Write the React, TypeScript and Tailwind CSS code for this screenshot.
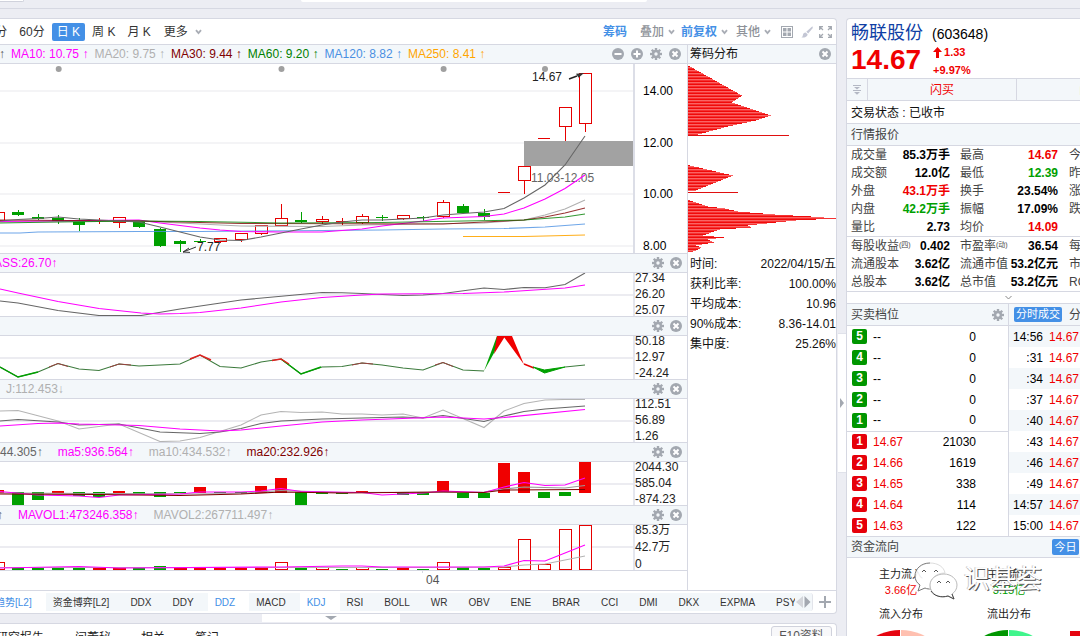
import type { ReactNode } from "react";

const TONE: Record<string, string> = {
  red: "text-[#f00000]",
  green: "text-[#00a000]",
  black: "text-black",
};

type Candle = { x: number; top: number; bottom: number; high: number; low: number; kind: "up" | "down" };

const candles: Candle[] = [
  { x: -2, top: 212, bottom: 221, high: 212, low: 221, kind: "up" },
  { x: 18, top: 212, bottom: 215, high: 210, low: 216, kind: "down" },
  { x: 38, top: 217, bottom: 219, high: 214, low: 220, kind: "down" },
  { x: 58, top: 218, bottom: 221, high: 215, low: 224, kind: "down" },
  { x: 79, top: 221, bottom: 225, high: 218, low: 231, kind: "down" },
  { x: 99, top: 220, bottom: 221, high: 218, low: 224, kind: "up" },
  { x: 119, top: 217, bottom: 223, high: 217, low: 228, kind: "up" },
  { x: 139, top: 221, bottom: 227, high: 221, low: 228, kind: "down" },
  { x: 160, top: 229, bottom: 246, high: 228, low: 247, kind: "down" },
  { x: 180, top: 241, bottom: 244, high: 240, low: 252, kind: "down" },
  { x: 200, top: 241, bottom: 242, high: 239, low: 243, kind: "down" },
  { x: 220, top: 238, bottom: 242, high: 238, low: 243, kind: "up" },
  { x: 241, top: 233, bottom: 240, high: 233, low: 242, kind: "up" },
  { x: 261, top: 225, bottom: 234, high: 225, low: 235, kind: "up" },
  { x: 281, top: 218, bottom: 226, high: 204, low: 226, kind: "up" },
  { x: 301, top: 220, bottom: 222, high: 212, low: 223, kind: "down" },
  { x: 322, top: 219, bottom: 222, high: 216, low: 224, kind: "up" },
  { x: 342, top: 221, bottom: 222, high: 218, low: 225, kind: "up" },
  { x: 362, top: 216, bottom: 223, high: 214, low: 224, kind: "up" },
  { x: 382, top: 217, bottom: 218, high: 215, low: 221, kind: "down" },
  { x: 403, top: 215, bottom: 219, high: 215, low: 220, kind: "up" },
  { x: 423, top: 217, bottom: 218, high: 216, low: 221, kind: "down" },
  { x: 443, top: 202, bottom: 217, high: 200, low: 218, kind: "up" },
  { x: 463, top: 206, bottom: 213, high: 204, low: 213, kind: "down" },
  { x: 484, top: 213, bottom: 217, high: 209, low: 220, kind: "down" },
  { x: 504, top: 192, bottom: 193, high: 192, low: 193, kind: "up" },
  { x: 524, top: 166, bottom: 181, high: 166, low: 194, kind: "up" },
  { x: 544, top: 138, bottom: 139, high: 138, low: 139, kind: "up" },
  { x: 565, top: 107, bottom: 127, high: 107, low: 141, kind: "up" },
  { x: 585, top: 73, bottom: 124, high: 73, low: 132, kind: "up" },
];

const priceLines = [
  { color: "#4a90e2", opacity: 0.8, points: "0,233 20,233 38,232 140,231.5 200,231.5 322,230.5 382,230 443,229 504,228.5 545,227 585,224" },
  { color: "#ffa500", opacity: 0.9, points: "463,236.5 524,236.5 545,236 585,235" },
  { color: "#b0b0b0", opacity: 1, points: "0,222 139,221 200,224 241,226 322,226.5 362,225 484,223 524,220 545,215 565,209 585,200" },
  { color: "#ff00ff", opacity: 1, points: "0,221.5 139,220 160,223 180,225.5 200,228 220,230 241,231.5 281,232 322,232 342,230.5 362,229 382,226 423,221 443,218 484,216.5 504,214 524,208 545,199 565,188.5 585,175" },
  { color: "#800000", opacity: 0.8, points: "0,220 139,221 241,223.5 443,224 484,222 524,220 545,217 565,213 585,208" },
  { color: "#008000", opacity: 0.8, points: "0,223 58,222 139,221 200,221.5 281,223 382,222.5 463,221 524,220 565,217 585,214" },
  { color: "#666666", opacity: 1, points: "0,221 18,219.5 38,218.5 58,217 79,219 99,220 119,221 139,222 160,227 180,232 200,237 220,240 241,240.5 261,237 281,233 301,229 322,225 342,222 362,220 382,220 403,219 423,218 443,215 463,213.5 484,212 504,208.5 524,198 545,185 565,165 585,136" },
];

// [x, top, bottom, color]
const ddzBars: [number, number, number, string][] = [
  [-2, 490, 493, "r"], [18, 492, 505, "g"], [38, 492, 500, "g"], [58, 491, 493, "r"], [79, 492, 496, "g"],
  [99, 492, 497, "g"], [119, 491, 493, "r"], [139, 492, 494, "g"], [160, 492, 497, "g"], [180, 492, 493, "g"],
  [200, 487, 493, "r"], [220, 492, 493, "g"], [241, 492, 493, "g"], [261, 486, 493, "r"], [281, 478, 493, "r"],
  [301, 492, 505, "g"], [322, 492, 494, "g"], [342, 492, 494, "g"], [362, 491, 493, "r"], [382, 492, 493, "g"],
  [403, 492, 495, "g"], [423, 492, 495, "g"], [443, 481, 492, "r"], [463, 493, 498, "g"], [484, 493, 498, "g"],
  [504, 463, 493, "r"], [524, 472, 493, "r"], [544, 492, 498, "g"], [565, 492, 496, "g"], [585, 462, 493, "r"],
];

// h is a hollow red bar
const volBars: [number, number, string][] = [
  [-2, 562, "h"], [18, 568, "g"], [38, 568, "g"], [58, 568, "g"], [79, 568, "g"], [99, 568, "h"], [119, 568, "h"],
  [139, 568, "g"], [160, 566, "g"], [180, 568, "h"], [200, 568, "r"], [220, 568, "r"], [241, 568, "r"],
  [261, 568, "h"], [281, 562, "h"], [301, 567, "g"], [322, 567, "h"], [342, 569, "g"], [362, 567, "h"],
  [382, 569, "g"], [403, 568, "r"], [423, 569, "g"], [443, 562, "h"], [463, 567, "g"], [484, 568, "g"],
  [504, 567, "h"], [524, 539, "h"], [544, 564, "h"], [565, 529, "h"], [585, 525, "h"],
];

// y position and bar width of the chip distribution
const chipGroups: [number, number][][] = [
  [[66, 2], [95, 54], [102, 44], [115, 83], [120, 68], [126, 40], [134, 10], [136, 1]],
  [[165, 2], [175, 45], [181, 30], [190, 8], [191, 4]],
  [[200, 2], [206, 20], [208, 37], [211, 50], [214, 87], [216, 123], [218, 148], [220, 108], [222, 88], [225, 60], [227, 63], [229, 32], [231, 26], [235, 15], [237, 36], [239, 20], [242, 26], [245, 8], [247, 13], [249, 10], [252, 3]],
];
const chipColors = ["#f00a0a", "#fa6464", "#f53232"];

function chipWidths() {
  const rows: { y: number; w: number }[] = [];
  chipGroups.forEach((group) => {
    for (let i = 0; i < group.length - 1; i++) {
      const [y0, w0] = group[i];
      const [y1, w1] = group[i + 1];
      for (let y = y0; y < y1; y++) rows.push({ y, w: Math.round(w0 + ((w1 - w0) * (y - y0)) / (y1 - y0)) });
    }
  });
  return rows;
}

const chipInfo = [
  ["时间:", "2022/04/15/五"],
  ["获利比率:", "100.00%"],
  ["平均成本:", "10.96"],
  ["90%成本:", "8.36-14.01"],
  ["集中度:", "25.26%"],
];

const maItems = [
  { text: "MA10: 10.75", color: "text-[#ff00ff]" },
  { text: "MA20: 9.75", color: "text-[#b0b0b0]" },
  { text: "MA30: 9.44", color: "text-[#800000]" },
  { text: "MA60: 9.20", color: "text-[#008000]" },
  { text: "MA120: 8.82", color: "text-[#4a90e2]" },
  { text: "MA250: 8.41", color: "text-[#ffa500]" },
];

const tabs = ["趋势[L2]", "资金博弈[L2]", "DDX", "DDY", "DDZ", "MACD", "KDJ", "RSI", "BOLL", "WR", "OBV", "ENE", "BRAR", "CCI", "DMI", "DKX", "EXPMA", "PSY"];
const activeTabs = ["趋势[L2]", "DDZ", "KDJ"];

type Row = { a: string; as?: string; av: string; at: string; b: string; bs?: string; bv: string; bt: string; c: string };

const quotes: Row[] = [
  { a: "成交量", av: "85.3万手", at: "black", b: "最高", bv: "14.67", bt: "red", c: "今开" },
  { a: "成交额", av: "12.0亿", at: "black", b: "最低", bv: "12.39", bt: "green", c: "昨收" },
  { a: "外盘", av: "43.1万手", at: "red", b: "换手", bv: "23.54%", bt: "black", c: "涨停" },
  { a: "内盘", av: "42.2万手", at: "green", b: "振幅", bv: "17.09%", bt: "black", c: "跌停" },
  { a: "量比", av: "2.73", at: "black", b: "均价", bv: "14.09", bt: "red", c: "" },
];
const finance: Row[] = [
  { a: "每股收益", as: "(四)", av: "0.402", at: "black", b: "市盈率", bs: "(动)", bv: "36.54", bt: "black", c: "每股" },
  { a: "流通股本", av: "3.62亿", at: "black", b: "流通市值", bv: "53.2亿元", bt: "black", c: "市净" },
  { a: "总股本", av: "3.62亿", at: "black", b: "总市值", bv: "53.2亿元", bt: "black", c: "ROE" },
];

const asks = [5, 4, 3, 2, 1];
const bids = [
  [1, "14.67", "21030"],
  [2, "14.66", "1619"],
  [3, "14.65", "338"],
  [4, "14.64", "114"],
  [5, "14.63", "122"],
];
const ticks = ["14:56", ":31", ":34", ":37", ":40", ":43", ":46", ":49", "14:57", "15:00"];

/* ---------- icons ---------- */

function GearIcon() {
  return (
    <svg width="12" height="12" viewBox="0 0 12 12" className="block">
      {[0, 45, 90, 135].map((a) => (
        <rect key={a} x="4.8" y="0" width="2.4" height="12" fill="#a3a8b0" transform={`rotate(${a} 6 6)`} />
      ))}
      <circle cx="6" cy="6" r="4.2" fill="#a3a8b0" />
      <circle cx="6" cy="6" r="1.7" fill="#f3f7fa" />
    </svg>
  );
}

function RoundIcon({ d }: { d: string }) {
  return (
    <svg width="12" height="12" viewBox="0 0 12 12" className="block">
      <circle cx="6" cy="6" r="6" fill="#a3a8b0" />
      <path d={d} stroke="#fff" strokeWidth="2" fill="none" />
    </svg>
  );
}
const CROSS = "M3.5 3.5l5 5M8.5 3.5l-5 5";

function Chevron() {
  return (
    <svg width="7" height="6" viewBox="0 0 7 6" className="block">
      <path d="M1 1.2l2.5 3 2.5-3" fill="none" stroke="#a9adb5" strokeWidth="1.8" />
    </svg>
  );
}

function IconButton({ label, children }: { label: string; children: ReactNode }) {
  return <button type="button" aria-label={label} className="cursor-pointer">{children}</button>;
}

/* ---------- chart pieces ---------- */

function Line({ points, color, opacity = 1 }: { points: string; color: string; opacity?: number }) {
  return <polyline points={points} fill="none" stroke={color} strokeWidth="1.1" strokeOpacity={opacity} />;
}

function PriceChart() {
  return (
    <svg viewBox="0 64 633 189" preserveAspectRatio="none" className="block h-[189px] min-w-0 flex-1">
      {[90, 142, 193, 245].map((y) => <rect key={y} x="0" y={y} width="633" height="2" fill="#f4f4f6" />)}
      {[58.7, 281.5, 443.6, 545].map((x) => <circle key={x} cx={x} cy="69" r="3" fill="#a0a0a0" />)}
      <rect x="524" y="141" width="109" height="25" fill="#a2a2a2" />
      {candles.map((c) => {
        const color = c.kind === "up" ? "#e60000" : "#00a000";
        const hollow = c.kind === "up" && c.bottom - c.top > 2;
        return (
          <g key={c.x}>
            <rect x={c.x} y={c.high} width="1" height={c.low - c.high} fill={color} />
            {hollow
              ? <rect x={c.x - 5.5} y={c.top + 0.5} width="12" height={c.bottom - c.top - 1} fill="#fff" stroke={color} />
              : <rect x={c.x - 6} y={c.top} width="12" height={c.bottom - c.top} fill={color} />}
          </g>
        );
      })}
      <text x="531" y="182" fontSize="12" fill="#666">11.03-12.05</text>
      {priceLines.map((l) => <Line key={l.color} {...l} />)}
      <text x="532" y="81" fontSize="12" fill="#222">14.67</text>
      <path d="M569 79l8-3" stroke="#222" strokeWidth="1.4" fill="none" />
      <path d="M584 73l-8 0.8 2.6 4z" fill="#333" />
      <text x="197" y="251" fontSize="12" fill="#222">7.77</text>
      <path d="M196 247l-13 5M189 248l-6 4 7 0.4" stroke="#333" fill="none" />
    </svg>
  );
}

function AxisLabels({ labels }: { labels: string[] }) {
  return (
    <div className="flex w-[54px] shrink-0 flex-col justify-between border-l-2 border-[#e4e6ee] text-[12px] leading-[11px] text-[#222]">
      {labels.map((l) => <span key={l}>{l}</span>)}
    </div>
  );
}

function SubPanel({ title, labels, top, height, children }: { title: ReactNode; labels: string[]; top: number; height: number; children: ReactNode }) {
  return (
    <section>
      <div className="flex h-5 items-center justify-between overflow-hidden border-y border-[#d6d8e2] bg-[#f3f7fa] pr-[5px] text-[12px] leading-[18px] whitespace-nowrap">
        <div className="flex gap-[15px]">{title}</div>
        <div className="flex gap-[6px]">
          <IconButton label="设置"><GearIcon /></IconButton>
          <IconButton label="关闭"><RoundIcon d={CROSS} /></IconButton>
        </div>
      </div>
      <div className="flex">
        <svg viewBox={`0 ${top} 633 ${height}`} preserveAspectRatio="none" style={{ height }} className="block min-w-0 flex-1">
          <rect x="0" y={top + 21} width="633" height="2" fill="#ececf1" />
          {children}
        </svg>
        <AxisLabels labels={labels} />
      </div>
    </section>
  );
}

function Toolbar() {
  const period = "cursor-pointer h-[18px] leading-[18px]";
  return (
    <div className="flex h-[26px] items-center justify-between border-b border-[#d6d8e2] text-[12px] text-[#333] whitespace-nowrap">
      <div className="-ml-[18px] flex items-center">
        <button type="button" className={period}>30分</button>
        <button type="button" className={`${period} ml-3`}>60分</button>
        <button type="button" className={`${period} mx-[7px] rounded-[2px] bg-[#4490e6] px-[5px] text-white`}>日 K</button>
        <button type="button" className={period}>周 K</button>
        <button type="button" className={`${period} ml-3`}>月 K</button>
        <button type="button" className={`${period} ml-[13px] flex items-center gap-[7px]`}>更多 <Chevron /></button>
      </div>
      <div className="flex items-center pr-1 font-medium text-[#8e9299]">
        <button type="button" className="font-bold text-[#4490e6]">筹码</button>
        <button type="button" className="ml-[13px] flex items-center gap-1">叠加 <Chevron /></button>
        <button type="button" className="ml-[6px] flex items-center gap-1 text-[#4490e6]"><span className="font-bold">前复权</span> <Chevron /></button>
        <button type="button" className="ml-[8px] flex items-center gap-1">其他 <Chevron /></button>
        <button type="button" aria-label="布局" className="ml-[10px]">
          <svg width="12" height="12" viewBox="0 0 12 12" className="block">
            <rect x="0.5" y="0.5" width="11" height="11" fill="none" stroke="#a3a8b0" />
            <path d="M2 2h3.5v3.5H2zM6.5 2H10v3.5H6.5zM2 6.5h3.5V10H2zM6.5 6.5H10V10H6.5z" fill="#a3a8b0" />
          </svg>
        </button>
        <button type="button" aria-label="画线" className="ml-2">
          <svg width="12" height="12" viewBox="0 0 12 12" className="block">
            <path d="M11.4 0.3l0.4 1.6-4.6 5.6-1.9-1.8z" fill="#c3c6d4" />
            <path d="M4.6 6.4l2 1.8c0 2.4-2.8 3.6-6.3 3.4 1.5-0.8 1.4-2 1.7-3.2 0.3-1.2 1.4-2 2.6-2z" fill="#c3c6d4" />
          </svg>
        </button>
        <button type="button" aria-label="全屏" className="ml-[6px]">
          <svg width="13" height="12" viewBox="0 0 13 12" className="block">
            <path d="M0.7 4V0.7H4M9 0.7h3.3V4M12.3 8v3.3H9M4 11.3H0.7V8M1 1l3 3M12 1L9 4M12 11L9 8M1 11l3-3" fill="none" stroke="#a3a8b0" strokeWidth="1.3" />
          </svg>
        </button>
      </div>
    </div>
  );
}

function ChipPanel() {
  return (
    <aside className="w-[148px] shrink-0">
      <div className="flex h-[19px] items-center justify-between border-b border-[#d6d8e2] bg-[#f3f7fa] pr-[5px] pl-[2px] text-[12px] text-[#111]">
        <span>筹码分布</span>
        <IconButton label="关闭筹码"><RoundIcon d={CROSS} /></IconButton>
      </div>
      <svg viewBox="0 64 148 190" className="block h-[190px] w-full">
        {chipWidths().map((r) => <rect key={r.y} x="0" y={r.y} width={r.w} height="1" fill={chipColors[r.y % 3]} />)}
        <rect x="0" y="135" width="101" height="1" fill="#e01010" />
        <rect x="0" y="192" width="50" height="1" fill="#e01010" />
      </svg>
      <dl className="text-[12px] leading-5 text-[#111]">
        {chipInfo.map(([k, v]) => (
          <div key={k} className="flex justify-between pl-[2px]"><dt>{k}</dt><dd>{v}</dd></div>
        ))}
      </dl>
    </aside>
  );
}

function Charts() {
  return (
    <div className="min-w-0 flex-1 border-r border-[#d6d8e2]">
      <div className="flex h-[19px] items-center justify-between border-b border-[#d6d8e2] bg-[#f3f7fa] pr-[6px] text-[12px] leading-[18px] whitespace-nowrap">
        <div className="-ml-px flex gap-[6px]">
          <span className="text-[#555]">↑</span>
          {maItems.map((m) => <span key={m.text} className={m.color}>{m.text} ↑</span>)}
        </div>
        <div className="flex gap-[7px]">
          <IconButton label="缩小"><RoundIcon d="M2.5 6h7" /></IconButton>
          <IconButton label="放大"><RoundIcon d="M2.5 6h7M6 2.5v7" /></IconButton>
          <IconButton label="设置"><GearIcon /></IconButton>
          <IconButton label="关闭"><RoundIcon d={CROSS} /></IconButton>
        </div>
      </div>
      <div className="flex">
        <PriceChart />
        <div className="flex w-[54px] shrink-0 flex-col justify-between border-l-2 border-[#dcdee7] pt-[21px] pb-px pl-2 text-[12px] leading-3 text-black">
          <span>14.00</span><span>12.00</span><span>10.00</span><span>8.00</span>
        </div>
      </div>

      <SubPanel title={<span className="-ml-[16px] text-[#ff00ff]">MASS:26.70↑</span>} labels={["27.34", "26.20", "25.07"]} top={273} height={43}>
        <Line color="#666" points="0,301 18,303 58,310.5 99,315.5 141,315.5 180,309 241,300 322,292.5 342,292.7 362,293.5 403,295.5 423,295 443,293.5 484,288 504,289.5 524,287.5 545,287.7 565,284.5 585,273" />
        <Line color="#ff00ff" points="0,289 18,293 58,301.5 99,308.5 141,313 160,314 180,313.5 200,312.5 241,308 281,302 322,297.5 362,295 382,294 463,293.5 504,292 565,288 585,285" />
      </SubPanel>

      <SubPanel title={null} labels={["50.18", "12.97", "-24.24"]} top={336} height={43}>
        <Line color="#3c7a3c" points="0,367 18,377 38,372 58,363.5 79,369 99,370.5 119,364 139,366 160,365 180,364 200,355 220,366.5 241,368 261,362 281,359 301,374 322,367 342,366.5 362,363 382,365 403,368 423,370 443,362.5 463,370 484,371" />
        <path d="M0 367l18 10 20-5M281 359l20 15 20-7" fill="none" stroke="#00a000" strokeWidth="1.4" />
        <path d="M190 359l10-4 11 5M272 360.5l9-1.5 8 5" fill="none" stroke="#e02020" strokeWidth="1.4" />
        <path d="M49 367l9-3.5 10 3M110 367l9-3 12 1M352 365l10-2 11 1M435 365l8-2.5 10 4" fill="none" stroke="#9a4040" />
        <path d="M484 371l13-35h4l-7 17z" fill="#00a000" />
        <path d="M494 354l3-18h15l12 28.5-19.7-27z" fill="#f00000" />
        <path d="M524 364l10 4" stroke="#e60000" strokeWidth="1.5" />
        <path d="M533 367l11.5 3 20.5-3-20.5 6z" fill="#00a000" stroke="#00a000" />
        <path d="M565 367l20-2" stroke="#3c7a3c" />
      </SubPanel>

      <SubPanel title={<span className="ml-[6px] text-[#b0b0b0]">J:112.453↓</span>} labels={["112.51", "56.89", "1.26"]} top={399} height={43}>
        <Line color="#b4b4b4" points="0,411 18,410.5 58,421 79,429 119,424 160,441.5 180,441 200,437.5 241,425 261,415 281,411.5 301,412.5 322,412 342,414 362,414 382,415 403,414 423,418 443,410 484,427.5 504,411 524,403.5 545,400 565,399.5 585,399.5" />
        <Line color="#666" points="0,421 18,419.5 58,422 79,425 119,424 160,432 200,433.5 220,432 241,428.5 261,423.5 281,421 322,419 362,418 403,417 423,418 443,415.5 484,421.5 504,416 524,411.5 545,409 585,406" />
        <Line color="#ff00ff" points="0,426 38,423.5 58,423 79,424 139,425.5 180,429 220,431 241,430 281,426 322,422 362,420 443,417 484,419 504,417.5 585,409.5" />
      </SubPanel>

      <SubPanel
        title={<>
          <span className="text-[#666]">44.305↑</span>
          <span className="text-[#ff00ff]">ma5:936.564↑</span>
          <span className="text-[#b0b0b0]">ma10:434.532↑</span>
          <span className="text-[#800000]">ma20:232.926↑</span>
        </>}
        labels={["2044.30", "585.04", "-874.23"]} top={462} height={43}>
        {ddzBars.map(([x, t, b, c]) => <rect key={x} x={x - 6} y={t} width="12" height={b - t} fill={c === "r" ? "#f00000" : "#00a000"} />)}
        <Line color="#999" points="0,493 200,494 241,493.5 281,490.5 342,492.5 484,492 504,489 524,487 565,488 585,485.5" />
        <Line color="#ff00ff" points="0,491.5 38,495 79,496 99,497.5 119,495 180,494 200,492 241,492 261,491 281,488.5 301,491.5 362,492.5 382,495 423,493 443,491 484,492.5 504,487 524,482.5 545,485.5 565,485 585,478" />
        <Line color="#800000" points="0,494 99,494.5 180,495.5 241,494 281,492 342,493 443,492 484,492.5 504,490 585,489.5" />
      </SubPanel>

      <SubPanel
        title={<>
          <span className="-ml-[3px] text-[#666]">↑</span>
          <span className="text-[#ff00ff]">MAVOL1:473246.358↑</span>
          <span className="text-[#b0b0b0]">MAVOL2:267711.497↑</span>
        </>}
        labels={["85.3万", "42.7万", "0"]} top={525} height={45}>
        {volBars.map(([x, t, c]) => c === "h"
          ? <rect key={x} x={x - 5.5} y={t + 0.5} width="12" height={569 - t} fill="#fff" stroke="#e60000" />
          : <rect key={x} x={x - 6} y={t} width="12" height={570 - t} fill={c === "r" ? "#f00000" : "#00a000"} />)}
        <Line color="#b4b4b4" points="0,567.5 443,567.5 504,567 524,565 545,564 565,560 585,556" />
        <Line color="#ff00ff" points="0,568 79,566.5 119,568 281,567 342,566 362,566 382,567 484,567 504,566 524,560.5 545,561 565,553 585,545" />
      </SubPanel>
      <div className="flex h-5 items-start gap-[3px] border-t border-[#d6d8e2] pl-[422px] text-[12px] leading-[19px] text-[#555]">
        <i className="h-[2px] w-px bg-[#d6d8e2]" />
        04
      </div>
    </div>
  );
}

function IndicatorTabs() {
  return (
    <div className="flex h-[23px] items-center justify-between border-t border-[#d6d8e2] pr-[5px]">
      <div className="relative flex h-[18px] min-w-0 flex-1 overflow-hidden rounded-r-[3px] border-r border-[#e2e4ea] bg-[#f3f7fa] text-[10px] leading-[19px] whitespace-nowrap text-[#333]">
        <div className="-ml-[12px] flex">
          {tabs.map((t) => (
            <button key={t} type="button" className={`shrink-0 pr-[14px] pl-[7px] ${activeTabs.includes(t) ? "bg-white text-[#4490e6]" : ""}`}>{t}</button>
          ))}
        </div>
        <div className="absolute inset-y-0 right-0 flex items-center bg-[#f3f7fa]">
          <svg width="17" height="14" viewBox="0 0 17 14">
            <path d="M8 1v12L1 7z" fill="#d3d5da" />
            <path d="M9.5 1v12l6-6z" fill="#a3a8b0" />
          </svg>
        </div>
      </div>
      <button type="button" aria-label="添加指标" className="ml-[6px]">
        <svg width="12" height="12" viewBox="0 0 12 12" className="block"><path d="M0 6h12M6 0v12" stroke="#a3a8b0" strokeWidth="2" /></svg>
      </button>
    </div>
  );
}

function QuoteTable({ rows }: { rows: Row[] }) {
  return (
    <table className="w-full table-fixed border-b border-[#d6d8e2] text-[12px] leading-[18px] whitespace-nowrap">
      <colgroup>
        <col className="w-[53px]" /><col className="w-[50px]" /><col className="w-[60px]" /><col className="w-[48px]" /><col />
      </colgroup>
      <tbody>
        {rows.map((r) => (
          <tr key={r.a} className="h-[18px] text-[#444]">
            <th className="p-0 pl-1 text-left font-normal">{r.a}<sup className="text-[7px]">{r.as}</sup></th>
            <td className={`p-0 text-right font-bold ${TONE[r.at]}`}>{r.av}</td>
            <th className="p-0 pl-[10px] text-left font-normal">{r.b}<sup className="text-[7px]">{r.bs}</sup></th>
            <td className={`p-0 text-right font-bold ${TONE[r.bt]}`}>{r.bv}</td>
            <th className="overflow-hidden p-0 pl-[11px] text-left font-normal">{r.c}</th>
          </tr>
        ))}
      </tbody>
    </table>
  );
}

function OrderBook() {
  return (
    <div className="flex">
      <div className="w-[162px] shrink-0 border-r border-[#d6d8e2]">
        <div className="flex h-[22px] items-center justify-between border-b border-[#d6d8e2] bg-[#f3f7fa] pr-1 pl-1 text-[12px] text-[#444]">
          买卖档位
          <IconButton label="档位设置"><GearIcon /></IconButton>
        </div>
        <table className="w-full table-fixed text-[12px] leading-5">
          <colgroup><col className="w-[26px]" /><col className="w-[50px]" /><col /></colgroup>
          <tbody>
            {asks.map((n) => (
              <tr key={n} className={`h-[21px] ${n === 1 ? "border-b border-[#d6d8e2]" : ""}`}>
                <td className="p-0 pl-[5px]"><span className="block h-[15px] w-[15px] rounded-[2px] bg-[#009600] text-center leading-[15px] font-bold text-white">{n}</span></td>
                <td className="p-0">--</td>
                <td className="p-0 pr-8 text-right">0</td>
              </tr>
            ))}
            {bids.map(([n, price, vol]) => (
              <tr key={n} className="h-[21px]">
                <td className="p-0 pl-[5px]"><span className="block h-[15px] w-[15px] rounded-[2px] bg-[#e6000a] text-center leading-[15px] font-bold text-white">{n}</span></td>
                <td className="p-0 text-[#f00000]">{price}</td>
                <td className="p-0 pr-8 text-right">{vol}</td>
              </tr>
            ))}
          </tbody>
        </table>
      </div>
      <div className="min-w-0 flex-1 overflow-hidden">
        <div className="flex h-[22px] items-center gap-[7px] border-b border-[#d6d8e2] bg-[#f3f7fa] pl-[5px] text-[12px] whitespace-nowrap text-[#444]">
          <button type="button" className="h-[15px] w-12 shrink-0 rounded-[2px] bg-[#4490e6] text-[11px] leading-[15px] text-white">分时成交</button>
          <button type="button">分价</button>
        </div>
        <table className="w-full table-fixed text-[12px] leading-5">
          <colgroup><col className="w-[34px]" /><col /></colgroup>
          <tbody>
            {ticks.map((t) => (
              <tr key={t} className="h-[21px] odd:bg-[#f3f7fa]">
                <td className="p-0 text-right">{t}</td>
                <td className="p-0 pl-[6px] text-[#f00000]">14.67</td>
              </tr>
            ))}
          </tbody>
        </table>
      </div>
    </div>
  );
}

function FlowCard({ name, value, tone, dist, colors }: { name: string; value: string; tone: string; dist: string; colors: [string, string] }) {
  return (
    <div className="flex w-[108px] shrink-0 flex-col items-center text-[11px] leading-4 text-[#222]">
      <span>{name}</span>
      <span className={tone}>{value}</span>
      <span className="mt-2">{dist}</span>
      <svg width="108" height="100" viewBox="0 0 108 100" className="mt-2 block">
        <path d="M53 0a50 50 0 0 0 0 100z" fill={colors[0]} />
        <path d="M54 0a50 50 0 0 1 0 100z" fill={colors[1]} />
      </svg>
    </div>
  );
}

function Watermark() {
  return (
    <div className="pointer-events-none absolute -top-px left-[65px] flex items-center gap-[6px]">
      <svg width="46" height="44" viewBox="0 0 46 44">
        <path d="M18 6C9 6 3 12 3 19c0 4 2 7 5 9l-2 6 7-3c2 1 4 1 6 1" fill="#fff" fillOpacity="0.9" stroke="#777" />
        <path d="M18 6c8 0 14 4 15 10-9 0-16 6-15 16" fill="#fff" fillOpacity="0.9" stroke="#ddd" />
        <path d="M32 17c7 0 13 5 13 11 0 4-2 7-5 9l2 5-6-3c-9 3-18-2-18-11 0-6 6-11 14-11z" fill="#fff" fillOpacity="0.9" stroke="#bbb" />
        <path d="M19 34c3 5 10 7 17 5l6 3-2-5" fill="none" stroke="#444" />
        <path d="M10 15l2-2 2 2M22 15l2-2 2 2M25 26l2-2 2 2M34 26l2-2 2 2" fill="none" stroke="#555" />
      </svg>
      <span className="text-[26px] leading-8 text-white [text-shadow:1px_1px_0_#555,-1px_0_0_#ccc]">识基荟</span>
    </div>
  );
}

function Sidebar() {
  return (
    <aside className="w-[234px] shrink-0 overflow-hidden rounded-tl-[4px] border-t border-l border-[#d6d8e2] bg-white">
      <div className="h-[60px] border-b border-[#d6d8e2] pl-[4px] whitespace-nowrap">
        <div className="flex h-[28px] items-center gap-[9px]">
          <h1 className="text-[18px] leading-7 text-[#0f3fa5]">畅联股份</h1>
          <span className="pt-[3px] text-[14px]">(603648)</span>
        </div>
        <div className="flex gap-[12px] font-bold text-[#f00000]">
          <strong className="text-[28px] leading-[26px]">14.67</strong>
          <div className="-mt-[4px] text-[11px] leading-[18px]">
            <div className="flex items-center gap-[2px]">
              <svg width="9" height="11" viewBox="0 0 9 11"><path d="M4.5 0L9 5H6v6H3V5H0z" fill="#f00000" /></svg>
              1.33
            </div>
            <div>+9.97%</div>
          </div>
        </div>
      </div>
      <div className="flex h-[22px] items-stretch border-b border-[#d6d8e2] bg-[#f3f7fa] text-[12px] whitespace-nowrap">
        <button type="button" aria-label="展开" className="flex w-[21px] shrink-0 items-center justify-center border-r border-[#d6d8e2]">
          <svg width="8" height="10" viewBox="0 0 8 10"><path d="M0 0h8v1H0zM1 2h6L4 4.5zM0 5h8v1H0zM1 7h6L4 9.8z" fill="#b4b8c4" /></svg>
        </button>
        <button type="button" className="w-[149px] shrink-0 border-r border-[#d6d8e2] text-[#f00000]">闪买</button>
        <button type="button" className="w-[149px] shrink-0 text-[#00a000]">闪卖</button>
      </div>
      <div className="h-[23px] border-b border-[#d6d8e2] pl-1 text-[12px] leading-[25px] text-[#111]">交易状态 : 已收市</div>
      <h2 className="h-[22px] border-b border-[#d6d8e2] bg-[#f3f7fa] pl-1 text-[12px] leading-[22px] text-[#444]">行情报价</h2>
      <QuoteTable rows={quotes} />
      <QuoteTable rows={finance} />
      <button type="button" aria-label="更多行情" className="flex h-3 w-full items-center border-b border-[#d6d8e2] pl-[158px]">
        <svg width="7" height="5" viewBox="0 0 7 5"><path d="M0.5 1l3 3 3-3" fill="none" stroke="#888" /></svg>
      </button>
      <OrderBook />
      <div className="flex h-[22px] items-center justify-between border-y border-[#d6d8e2] bg-[#f3f7fa] pr-px pl-1 text-[12px] text-[#444]">
        资金流向
        <button type="button" className="h-4 w-[27px] rounded-[2px] bg-[#4490e6] text-[11px] leading-4 text-white">今日</button>
      </div>
      <div className="relative flex pt-2">
        <FlowCard name="主力流入" value="3.66亿" tone="text-[#f00000]" dist="流入分布" colors={["#e60510", "#ffc0b0"]} />
        <FlowCard name="主力流出" value="3.15亿" tone="text-[#00a000]" dist="流出分布" colors={["#009600", "#40f58c"]} />
        <div className="mt-[65px] ml-[7px] h-4 w-4 shrink-0 bg-[#e60510]" />
        <Watermark />
      </div>
    </aside>
  );
}

function App() {
  return (
    <div className="flex h-screen flex-col overflow-hidden bg-[#ecedf3] font-['Liberation_Sans','Noto_Sans_CJK_SC',sans-serif] text-black">
      <header className="flex h-[9px] shrink-0 items-start border-b border-[#d6d8e2]">
        <div className="h-[2px] w-6 rounded-br-[2px] border-r border-b border-[#d0d2dc] bg-white" />
        <div className="ml-[277px] h-[2px] w-[346px] rounded-b-[3px] bg-white" />
      </header>
      <div className="mt-[9px] flex min-h-0 flex-1">
        <main className="flex min-w-0 flex-1 flex-col">
          <div className="shrink-0 overflow-hidden rounded-r-[4px] border-y border-r border-[#d6d8e2] bg-white">
            <Toolbar />
            <div className="flex">
              <Charts />
              <ChipPanel />
            </div>
            <IndicatorTabs />
          </div>
          <div className="h-[9px] shrink-0">
            <button type="button" aria-label="收起" className="ml-[262px] flex h-2 w-[138px] items-center justify-center bg-white">
              <svg width="12" height="4" viewBox="0 0 12 4"><path d="M0 0h12L6 4z" fill="#a3a8b0" /></svg>
            </button>
          </div>
          <nav className="flex shrink-0 items-start justify-between rounded-tr-[4px] border-t border-r border-[#d6d8e2] bg-white pr-1 text-[12px] leading-[22px] text-[#222]">
            <div className="-ml-1 flex pt-[3px]">
              <a href="#report">研究报告</a>
              <a href="#ask" className="ml-[31px]">问董秘</a>
              <a href="#related" className="ml-[30px]">相关</a>
              <a href="#notes" className="ml-[30px]">笔记</a>
            </div>
            <button type="button" className="mt-[2px] h-5 w-[61px] rounded-[3px] border border-[#d0d2dc] bg-[#f8f8fa] leading-[18px] text-[#555]">F10资料</button>
          </nav>
        </main>
        <div className="flex w-[9px] shrink-0 flex-col items-end">
          <button type="button" aria-label="折叠侧栏" className="mt-[315px] flex h-[140px] w-2 items-center justify-center border-y border-[#e0e2ea] bg-white">
            <svg width="4" height="10" viewBox="0 0 4 10"><path d="M0 0v10l4-5z" fill="#a3a8b0" /></svg>
          </button>
        </div>
        <Sidebar />
      </div>
    </div>
  );
}

export default App;
